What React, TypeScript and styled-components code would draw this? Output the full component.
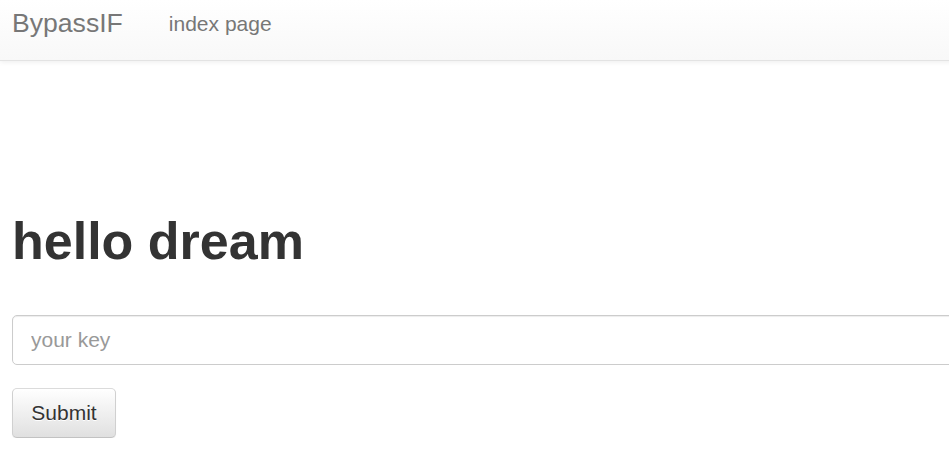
import React from 'react'
import styled, { createGlobalStyle } from 'styled-components'

const GlobalStyle = createGlobalStyle`
  html, body {
    margin: 0;
    padding: 0;
    background: #fff;
    overflow: hidden;
  }
  body {
    font-family: "Liberation Sans", Arial, Helvetica, sans-serif;
    color: #333;
  }
  * {
    box-sizing: border-box;
  }
`

const Navbar = styled.nav`
  background-color: #f8f8f8;
  background-image: linear-gradient(to bottom, #fff 0, #f8f8f8 100%);
  border-bottom: 1px solid #e3e3e3;
  box-shadow: inset 0 1px 0 rgba(255, 255, 255, 0.15), 0 1px 5px rgba(0, 0, 0, 0.075);
  height: 61px;
  width: 1200px;
`

const NavInner = styled.div`
  display: flex;
  align-items: flex-start;
  padding: 0 12px;
`

const Brand = styled.a`
  color: #777;
  font-size: 26.6px;
  line-height: 30px;
  padding-top: 8px;
  text-decoration: none;
`

const NavLink = styled.a`
  color: #777;
  font-size: 21px;
  line-height: 30px;
  padding-top: 9px;
  margin-left: 46px;
  text-decoration: none;
`

const Container = styled.main`
  padding: 0 12px;
  width: 1200px;
`

const Title = styled.h1`
  font-size: 52px;
  font-weight: bold;
  line-height: 1.1;
  margin: 152px 0 45px;
  color: #333;
`

const Form = styled.form`
  display: flex;
  flex-direction: column;
  align-items: flex-start;
  gap: 23px;
`

const KeyInput = styled.input`
  width: 100%;
  height: 50px;
  padding: 0 18px;
  font-family: inherit;
  font-size: 21px;
  color: #555;
  background: #fff;
  border: 1px solid #ccc;
  border-radius: 5px;
  box-shadow: inset 0 1px 1px rgba(0, 0, 0, 0.075);
  outline: none;

  &::placeholder {
    color: #999;
  }
`

const Button = styled.button`
  height: 50px;
  width: 104px;
  font-family: inherit;
  font-size: 21px;
  color: #333;
  background-color: #e0e0e0;
  background-image: linear-gradient(to bottom, #fff 0, #e0e0e0 100%);
  border: 1px solid #ccc;
  border-color: #dbdbdb #d0d0d0 #c2c2c2;
  border-radius: 5px;
  text-shadow: 0 1px 0 #fff;
  box-shadow: inset 0 1px 0 rgba(255, 255, 255, 0.15), 0 1px 1px rgba(0, 0, 0, 0.075);
  cursor: pointer;
`

const App: React.FC = () => {
  return (
    <>
      <GlobalStyle />
      <Navbar>
        <NavInner>
          <Brand href="#">BypassIF</Brand>
          <NavLink href="#">index page</NavLink>
        </NavInner>
      </Navbar>
      <Container>
        <Title>hello dream</Title>
        <Form onSubmit={e => e.preventDefault()}>
          <KeyInput type="text" placeholder="your key" />
          <Button type="submit">Submit</Button>
        </Form>
      </Container>
    </>
  )
}

export default App
